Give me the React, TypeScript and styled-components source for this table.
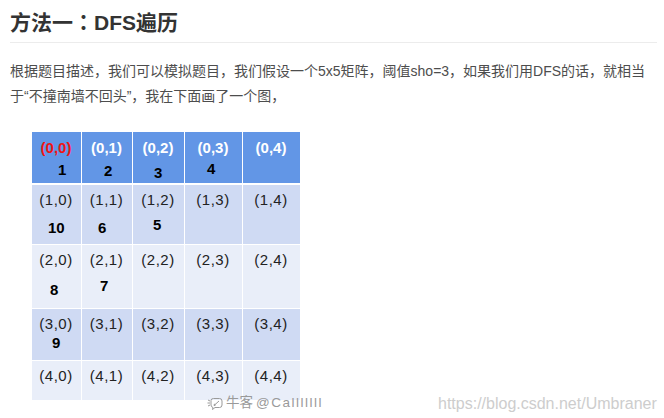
import React from 'react';
import styled, { createGlobalStyle } from 'styled-components';

const GlobalStyle = createGlobalStyle`
  html, body {
    margin: 0;
    padding: 0;
    background: #fff;
  }
  body {
    font-family: "Liberation Sans", "Noto Sans CJK SC", sans-serif;
  }
`;

const Page = styled.div`
  width: 647px;
  padding: 0 10px;
`;

const Title = styled.h2`
  margin: 0;
  padding: 6px 0 4px;
  line-height: 30px;
  font-size: 21px;
  font-weight: bold;
  color: #333;
  border-bottom: 1px solid #ececec;
`;

// 冒号居中显示
const Colon = styled.span`
  font-family: "Noto Sans CJK TC", sans-serif;
`;

const Para = styled.p`
  margin: 16px 0 0;
  font-size: 14px;
  line-height: 25px;
  color: #4d4d4d;
`;

const Figure = styled.div`
  position: relative;
  margin: 23px 0 0 22px;
  width: 628px;
  height: 290px;
`;

// 5x5 矩阵
const Grid = styled.div`
  display: grid;
  grid-template-columns: 49px 50px 51px 57px 57px;
  grid-template-rows: 52px 59px 63px 51px 39px;
  gap: 1px;
  width: 268px;
  background: #fff;
`;

const Cell = styled.div<{ $bg: string; $head?: boolean }>`
  display: flex;
  flex-direction: column;
  box-sizing: border-box;
  padding-top: ${(p) => (p.$head ? 7 : 6)}px;
  background: ${(p) => p.$bg};
  border-bottom: ${(p) => (p.$head ? '1px solid #fff' : 'none')};
`;

const Coord = styled.div<{ $head?: boolean; $red?: boolean }>`
  padding-right: 1px;
  text-align: center;
  font-family: "Liberation Sans", Arial, sans-serif;
  font-size: 15px;
  line-height: 17px;
  letter-spacing: ${(p) => (p.$head ? 0 : 0.5)}px;
  font-weight: ${(p) => (p.$head ? 'bold' : 'normal')};
  color: ${(p) => (p.$red ? '#f01414' : p.$head ? '#fff' : '#222')};
`;

const Num = styled.div<{ $x: number; $y: number }>`
  align-self: flex-start;
  margin-left: ${(p) => p.$x}px;
  margin-top: ${(p) => p.$y}px;
  font-family: "Liberation Sans", Arial, sans-serif;
  font-size: 15px;
  line-height: 17px;
  font-weight: bold;
  color: #000;
`;

const Mark = styled.div`
  position: absolute;
  left: 175px;
  top: 263px;
  display: flex;
  align-items: center;
  gap: 3px;
  font-size: 13.5px;
  line-height: 16px;
  color: #9a9a9a;
`;

const MarkName = styled.span`
  letter-spacing: 1.5px;
`;

const Url = styled.div`
  position: absolute;
  left: 406px;
  top: 263px;
  font-family: "Liberation Sans", Arial, sans-serif;
  font-size: 16px;
  line-height: 18px;
  color: #cdcdcd;
  text-shadow: 0 0 1px #fff;
`;

const ROW_BG = ['#6296e6', '#cfdaf3', '#e9eef9', '#cfdaf3', '#e9eef9'];

// 访问顺序标注：[行, 列, 数字, x, y]
const steps: [number, number, string, number, number][] = [
  [0, 0, '1', 26, 5],
  [0, 1, '2', 22, 6],
  [0, 2, '3', 21, 8],
  [0, 3, '4', 22, 4],
  [1, 0, '10', 16, 11],
  [1, 1, '6', 16, 11],
  [1, 2, '5', 20, 8],
  [2, 0, '8', 18, 13],
  [2, 1, '7', 18, 9],
  [3, 0, '9', 20, 2],
];

const NowcoderIcon = () => (
  <svg width="16" height="13" viewBox="0 0 16 13" fill="none" stroke="#9a9a9a" strokeWidth="1">
    <path d="M1 3 L3 4 M0.5 6 L3 6 M1 9 L3 8" />
    <path d="M4 3.5 Q4 1.5 6.5 1.5 L12.5 1.5 Q15 1.5 15 4 L15 8 Q15 10.5 12.5 10.5 L8 10.5 L5.5 12.5 L6 10.5 Q4 10 4 8 Z" />
    <path d="M7 8.5 L12 4 M7 8.5 L7.5 6.8 M7 8.5 L8.7 8" />
  </svg>
);

const App: React.FC = () => {
  return (
    <>
      <GlobalStyle />
      <Page>
        <Title>
          方法一<Colon>：</Colon>DFS遍历
        </Title>
        <Para>
          根据题目描述，我们可以模拟题目，我们假设一个5x5矩阵，阈值sho=3，如果我们用DFS的话，就相当
          <br />
          于“不撞南墙不回头”，我在下面画了一个图，
        </Para>
        <Figure>
          <Grid>
            {ROW_BG.map((bg, r) =>
              [0, 1, 2, 3, 4].map((c) => {
                const step = steps.find((s) => s[0] === r && s[1] === c);
                return (
                  <Cell key={`${r}-${c}`} $bg={bg} $head={r === 0}>
                    <Coord $head={r === 0} $red={r === 0 && c === 0}>
                      ({r},{c})
                    </Coord>
                    {step && (
                      <Num $x={step[3]} $y={step[4]}>
                        {step[2]}
                      </Num>
                    )}
                  </Cell>
                );
              })
            )}
          </Grid>
          <Mark>
            <NowcoderIcon />
            <span>牛客</span>
            <MarkName>@Calllllll</MarkName>
          </Mark>
          <Url>https://blog.csdn.net/Umbraner</Url>
        </Figure>
      </Page>
    </>
  );
};

export default App;
